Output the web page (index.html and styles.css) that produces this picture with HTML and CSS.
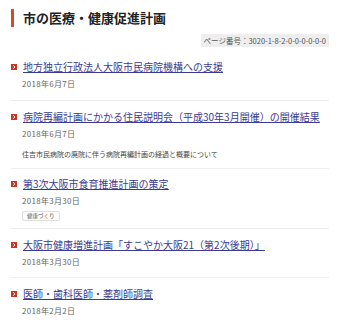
FILE: index.html
```html
<!DOCTYPE html>
<html lang="ja">
<head>
  <meta charset="UTF-8" />
  <meta name="viewport" content="width=device-width, initial-scale=1.0" />
  <title>市の医療・健康促進計画</title>
  <link rel="stylesheet" href="styles.css">
</head>
<body>
  <div class="page">
    <h1 class="page-title">市の医療・健康促進計画</h1>
    <div class="page-num-row">
      <span class="page-num">ページ番号：3020-1-8-2-0-0-0-0-0-0</span>
    </div>

    <ul class="news-list">
      <li class="news-item">
        <a class="news-link" href="#">
          <svg class="arrow" width="6" height="6" viewBox="0 0 6 6"><rect width="6" height="6" fill="#c23a26"/><path d="M2.2 1.4 L3.9 3 L2.2 4.6" fill="none" stroke="#fff" stroke-width="1"/></svg>
          <span>地方独立行政法人大阪市民病院機構への支援</span>
        </a>
        <p class="date">2018年6月7日</p>
      </li>
      <li class="news-item">
        <a class="news-link" href="#">
          <svg class="arrow" width="6" height="6" viewBox="0 0 6 6"><rect width="6" height="6" fill="#c23a26"/><path d="M2.2 1.4 L3.9 3 L2.2 4.6" fill="none" stroke="#fff" stroke-width="1"/></svg>
          <span>病院再編計画にかかる住民説明会（平成30年3月開催）の開催結果</span>
        </a>
        <p class="date">2018年6月7日</p>
        <p class="desc">住吉市民病院の廃院に伴う病院再編計画の経過と概要について</p>
      </li>
      <li class="news-item news-item-tagged">
        <a class="news-link" href="#">
          <svg class="arrow" width="6" height="6" viewBox="0 0 6 6"><rect width="6" height="6" fill="#c23a26"/><path d="M2.2 1.4 L3.9 3 L2.2 4.6" fill="none" stroke="#fff" stroke-width="1"/></svg>
          <span>第3次大阪市食育推進計画の策定</span>
        </a>
        <p class="date">2018年3月30日</p>
        <div class="tags"><span class="tag">健康づくり</span></div>
      </li>
      <li class="news-item">
        <a class="news-link" href="#">
          <svg class="arrow" width="6" height="6" viewBox="0 0 6 6"><rect width="6" height="6" fill="#c23a26"/><path d="M2.2 1.4 L3.9 3 L2.2 4.6" fill="none" stroke="#fff" stroke-width="1"/></svg>
          <span>大阪市健康増進計画「すこやか大阪21（第2次後期）」</span>
        </a>
        <p class="date">2018年3月30日</p>
      </li>
      <li class="news-item">
        <a class="news-link" href="#">
          <svg class="arrow" width="6" height="6" viewBox="0 0 6 6"><rect width="6" height="6" fill="#c23a26"/><path d="M2.2 1.4 L3.9 3 L2.2 4.6" fill="none" stroke="#fff" stroke-width="1"/></svg>
          <span>医師・歯科医師・薬剤師調査</span>
        </a>
        <p class="date">2018年2月2日</p>
      </li>
    </ul>
  </div>
</body>
</html>
```

FILE: styles.css
```css
* { box-sizing: border-box; margin: 0; padding: 0; }
body {
  font-family: 'Noto Sans CJK JP', 'Liberation Sans', sans-serif;
  background-color: #fff; color: #333;
}
.page { padding: 9px 9px 0 11px; }
.page-title {
  border-left: 3px solid #c94f30;
  padding-left: 9px;
  font-size: 13px; line-height: 18px;
  font-weight: bold; color: #222;
}
.page-num-row {
  display: flex; justify-content: flex-end;
  margin-top: 7px;
}
.page-num {
  background: #eee; color: #555;
  font-size: 7.5px; line-height: 13px;
  padding: 0 3px;
}
.news-list { list-style: none; margin-top: 4px; }
.news-item {
  padding: 8px 0 8px 0;
  border-bottom: 1px solid #eee;
}
.news-item:last-child { border-bottom: none; }
.news-item-tagged { padding-top: 7px; padding-bottom: 7px; }
.news-link {
  display: flex; align-items: center; gap: 6px;
  font-size: 10px; line-height: 16px;
  color: #3b3b92;
}
.news-link span { text-decoration: underline; }
.arrow { flex-shrink: 0; }
.date {
  margin: 4px 0 2.5px 11px;
  font-size: 8px; line-height: 10px;
  letter-spacing: 0.3px; color: #666;
}
.desc {
  margin: 10px 0 1px 11px;
  font-size: 7px; line-height: 10px;
  color: #444;
}
.tags { display: flex; margin: 5px 0 0 11px; }
.tag {
  border: 1px solid #ddd; border-radius: 2px;
  padding: 0 4px;
  font-size: 5.5px; line-height: 8px;
  color: #555;
}
```
